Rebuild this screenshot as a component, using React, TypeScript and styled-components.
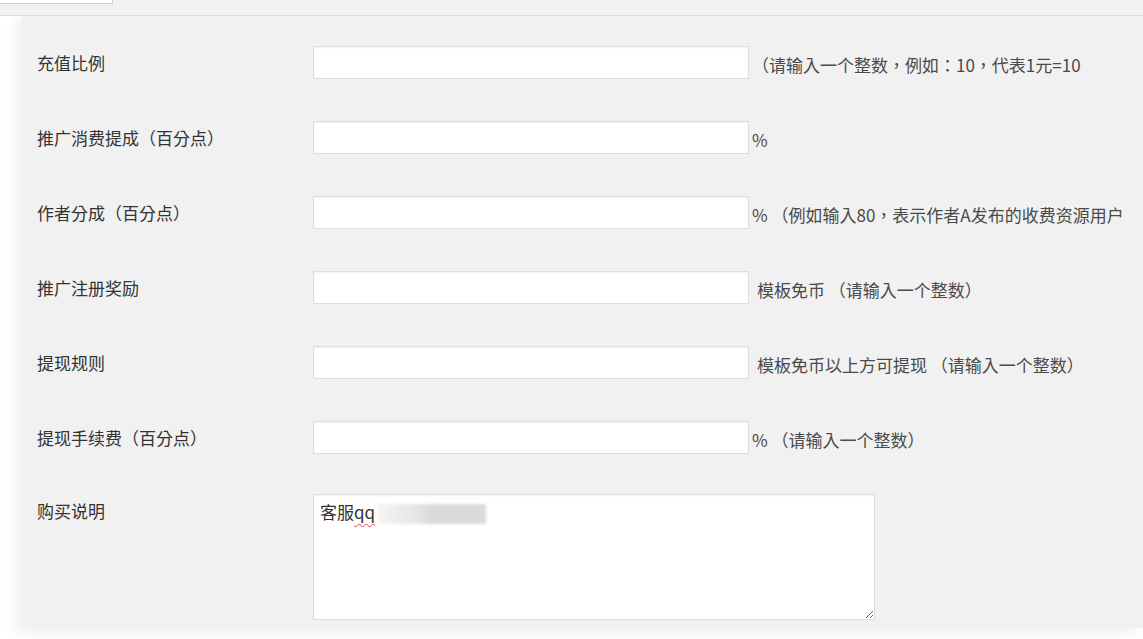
import React, { FC } from "react";
import styled, { createGlobalStyle } from "styled-components";

const GlobalStyle = createGlobalStyle`
  html, body {
    margin: 0;
    padding: 0;
    background: #ffffff;
    overflow: hidden;
  }
  body {
    font-family: "Noto Sans CJK TC", "Noto Sans CJK SC", "Noto Sans", sans-serif;
    color: #444;
    text-spacing-trim: space-all;
  }
`;

const Page = styled.div`
  width: 1143px;
  height: 639px;
  display: flex;
  flex-direction: column;
`;

const TopBar = styled.div`
  position: relative;
  z-index: 2;
  height: 15px;
  background: #f1f1f1;
  border-bottom: 1px solid #dcdcdc;
`;

const Tab = styled.div`
  width: 112px;
  height: 3px;
  background: #ffffff;
  border-right: 1px solid #cfcfcf;
  border-bottom: 1px solid #cfcfcf;
`;

const Panel = styled.div`
  margin-left: 22px;
  height: 612px;
  box-sizing: border-box;
  padding: 9px 0 8px 15px;
  background: #f1f1f1;
  box-shadow: -6px 4px 14px rgba(0, 0, 0, 0.07);
  white-space: nowrap;
  overflow: hidden;
`;

const Row = styled.div<{ $top?: boolean }>`
  display: grid;
  grid-template-columns: 276px auto;
  align-items: ${(p) => (p.$top ? "start" : "center")};
  height: ${(p) => (p.$top ? "auto" : "75px")};
  padding-top: ${(p) => (p.$top ? "19px" : "0")};
`;

const Label = styled.div`
  font-size: 17px;
  line-height: 33px;
  color: #333;
`;

const Field = styled.div`
  display: flex;
  align-items: center;
`;

const Input = styled.input`
  width: 436px;
  height: 33px;
  box-sizing: border-box;
  margin: 0;
  border: 1px solid #dedede;
  background: #fff;
  box-shadow: inset 0 1px 2px rgba(0, 0, 0, 0.06);
  outline: none;
`;

const Suffix = styled.span<{ $gap: number }>`
  margin-left: ${(p) => p.$gap}px;
  padding-top: 4px;
  font-size: 17px;
  color: #4a4a4a;
`;

const TextBox = styled.div`
  width: 562px;
  height: 126px;
  box-sizing: border-box;
  padding: 4px 6px;
  border: 1px solid #dedede;
  background: #fff;
  box-shadow: inset 0 1px 2px rgba(0, 0, 0, 0.06);
  font-size: 17px;
  line-height: 26px;
  color: #333;
  overflow: auto;
  resize: both;
`;

const Misspelled = styled.span`
  text-decoration: underline wavy #e04848;
  text-decoration-thickness: 1px;
  text-underline-offset: 4px;
`;

const Blurred = styled.span`
  display: inline-block;
  vertical-align: middle;
  width: 108px;
  height: 20px;
  margin-left: 3px;
  background: linear-gradient(90deg, #f4f4f4 0%, #e6e6e6 35%, #d9d9d9 50%, #dadada 100%);
  filter: blur(1.5px);
`;

type FieldRow = { label: string; suffix: string; gap: number };

const rows: FieldRow[] = [
  { label: "充值比例", suffix: "（请输入一个整数，例如：10，代表1元=10", gap: 3 },
  { label: "推广消费提成（百分点）", suffix: "%", gap: 3 },
  { label: "作者分成（百分点）", suffix: "% （例如输入80，表示作者A发布的收费资源用户", gap: 3 },
  { label: "推广注册奖励", suffix: "模板免币 （请输入一个整数）", gap: 8 },
  { label: "提现规则", suffix: "模板免币以上方可提现 （请输入一个整数）", gap: 8 },
  { label: "提现手续费（百分点）", suffix: "% （请输入一个整数）", gap: 3 },
];

const App: FC = () => {
  return (
    <Page>
      <GlobalStyle />
      <TopBar>
        <Tab />
      </TopBar>
      <Panel>
        {rows.map((r) => (
          <Row key={r.label}>
            <Label>{r.label}</Label>
            <Field>
              <Input type="text" />
              <Suffix $gap={r.gap}>{r.suffix}</Suffix>
            </Field>
          </Row>
        ))}
        <Row $top>
          <Label>购买说明</Label>
          <TextBox>
            客服<Misspelled>qq</Misspelled>
            <Blurred />
          </TextBox>
        </Row>
      </Panel>
    </Page>
  );
};

export default App;
